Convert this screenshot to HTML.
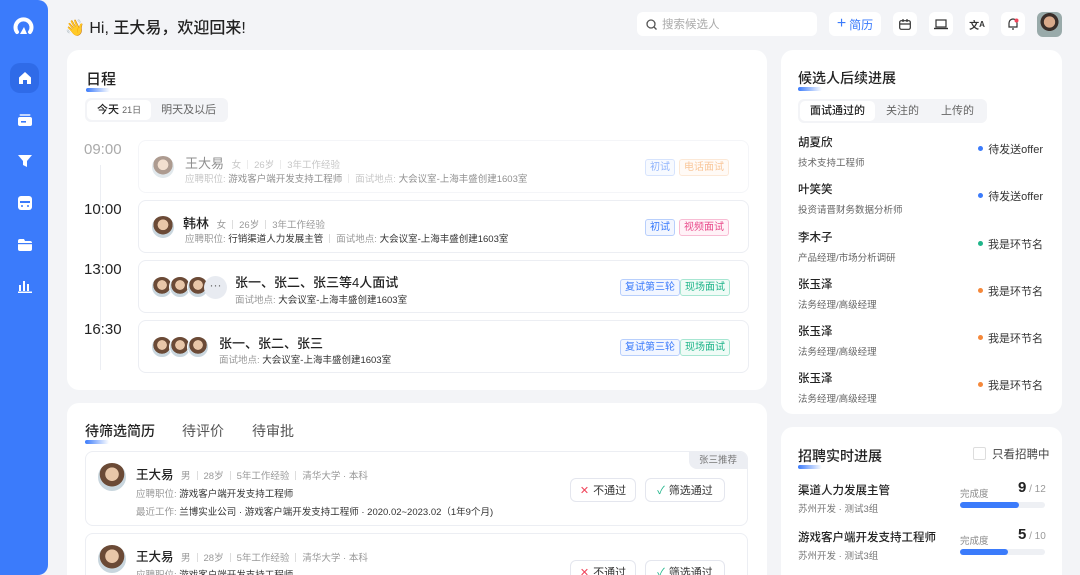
<!DOCTYPE html>
<html style="overflow:hidden;height:575px"><head><meta charset="utf-8"><style>
*{margin:0;padding:0;box-sizing:border-box}
body{width:1080px;height:575px;overflow:hidden;background:#f3f4f7;font-family:"Liberation Sans","Noto Sans CJK SC",sans-serif;color:#222;position:relative;font-size:12px}
.abs{position:absolute}
.side{left:0;top:0;width:48px;height:575px;background:#3b7bfb;border-radius:0 10px 10px 0}
.side .ic{position:absolute;left:10px;width:29px;height:30px;border-radius:10px;display:flex;align-items:center;justify-content:center}
.card{background:#fff;border-radius:12px;position:absolute}
.ttl{font-size:15px;font-weight:500;color:#222;position:absolute}
.ttl:after{content:"";position:absolute;left:0;bottom:-3px;width:24px;height:4px;border-radius:2px;background:linear-gradient(90deg,#3b7bfb,rgba(59,123,251,0))}
.seg{position:absolute;background:#f3f4f7;border-radius:6px;display:flex;padding:2px;font-size:11px;color:#666}
.seg div{padding:0 10px;line-height:20px;border-radius:5px}
.seg .on{background:#fff;color:#222;font-weight:500}
.hb{position:absolute;top:12px;height:24px;background:#fff;border-radius:6px;display:flex;align-items:center;justify-content:center}
.time{position:absolute;left:84px;font-size:15px;color:#222}
.ev{position:absolute;left:138px;width:611px;height:53px;border:1px solid #eceef3;border-radius:8px}
.tag{position:absolute;font-size:10px;height:17px;line-height:15px;border:1px solid;border-radius:3px;padding:0 4px}
.av{position:absolute;width:22px;height:22px;border-radius:50%;background:radial-gradient(circle at 50% 40%,#e8c6a8 0 30%,#6b4a36 32% 55%,#c9d6de 57%);border:1px solid #fff}
.g{color:#999}
.sep{display:inline-block;width:1px;height:9px;background:#ddd;margin:0 6px;vertical-align:-1px}
.rl{position:absolute;left:798px;width:250px}
.rl .n{font-size:11.5px;font-weight:500;color:#222}
.rl .s{font-size:9.5px;color:#666;margin-top:5px}
.rl .st{position:absolute;right:5px;top:7px;font-size:11px;color:#333}
.rl .st:before{content:"";display:inline-block;width:5px;height:5px;border-radius:50%;background:var(--c);margin-right:5px;vertical-align:2px}
.btn{position:absolute;height:24px;border:1px solid #e4e6ee;border-radius:6px;font-size:11px;display:flex;align-items:center;justify-content:center;color:#333}
</style></head><body>
<div class="abs side">
 <svg class="abs" style="left:13px;top:15px" width="22" height="22" viewBox="0 0 22 22"><path d="M4 17 A8 8 0 1 1 17 17" fill="none" stroke="#fff" stroke-width="4" stroke-linecap="round"/><path d="M11 12 l-4 7 h7z" fill="#fff"/></svg>
 <div class="ic" style="top:63px;background:#2f6be8"><svg width="14" height="14" viewBox="0 0 14 14"><path d="M7 1 L13 6.5 V13 H9 V9 H5 V13 H1 V6.5z" fill="#fff"/></svg></div>
 <div class="ic" style="top:105px"><svg width="14" height="12"><rect x="0" y="3" width="14" height="9" rx="2" fill="#fff"/><rect x="1.5" y="0" width="11" height="2" rx="1" fill="#fff" opacity=".7"/><rect x="3" y="7" width="5" height="1.6" fill="#3b7bfb"/></svg></div>
 <div class="ic" style="top:146px"><svg width="14" height="14"><path d="M0 1 H14 L9 7 V13 L5 11 V7z" fill="#fff"/></svg></div>
 <div class="ic" style="top:188px"><svg width="14" height="14"><rect x="0" y="0" width="14" height="14" rx="3" fill="#fff"/><rect x="2" y="5" width="10" height="2" fill="#3b7bfb"/><circle cx="4" cy="10" r="1" fill="#3b7bfb"/><circle cx="10" cy="10" r="1" fill="#3b7bfb"/></svg></div>
 <div class="ic" style="top:230px"><svg width="14" height="12"><path d="M0 2 Q0 0 2 0 H6 L7 2 H12 Q14 2 14 4 V10 Q14 12 12 12 H2 Q0 12 0 10z" fill="#fff"/><rect x="0" y="4" width="14" height="1.2" fill="#3b7bfb"/></svg></div>
 <div class="ic" style="top:271px"><svg width="14" height="13"><rect x="1" y="5" width="2" height="6" fill="#fff"/><rect x="5" y="1" width="2" height="10" fill="#fff"/><rect x="9" y="4" width="2" height="7" fill="#fff"/><rect x="0" y="11.5" width="14" height="1.5" fill="#fff"/></svg></div>
</div>
<div class="abs" style="left:65px;top:14px;font-size:16px;font-weight:500;color:#222">👋 Hi, 王大易，欢迎回来!</div>
<div class="hb" style="left:637px;width:180px;justify-content:flex-start;padding-left:9px;font-size:11.5px;color:#aaa"><svg width="11" height="11" style="margin-right:5px"><circle cx="5" cy="5" r="4" fill="none" stroke="#555" stroke-width="1.3"/><path d="M8 8l2.5 2.5" stroke="#555" stroke-width="1.3"/></svg>搜索候选人</div>
<div class="hb" style="left:829px;width:52px;color:#3b7bfb;font-size:12px"><span style="font-size:16px;margin-right:3px;line-height:1">+</span>简历</div>
<div class="hb" style="left:893px;width:24px"><svg width="12" height="11"><rect x=".7" y="1.7" width="10.6" height="8.6" rx="1.5" fill="none" stroke="#333" stroke-width="1.2"/><path d="M1 5h10M4 0v3M8 0v3" stroke="#333" stroke-width="1.2"/></svg></div>
<div class="hb" style="left:929px;width:24px"><svg width="14" height="11"><rect x="2" y="1" width="10" height="7" fill="none" stroke="#333" stroke-width="1.2"/><path d="M0 9.5h14" stroke="#333" stroke-width="1.4"/></svg></div>
<div class="hb" style="left:965px;width:24px;font-size:10px;font-weight:bold;color:#333">文<span style="font-size:8px">A</span></div>
<div class="hb" style="left:1001px;width:24px"><svg width="12" height="12"><path d="M2 9 V5 A4 4 0 0 1 10 5 V9 Z M5 11h2" fill="none" stroke="#333" stroke-width="1.2"/><circle cx="9.5" cy="2.5" r="2" fill="#f0445a"/></svg></div>
<div class="abs" style="left:1037px;top:12px;width:25px;height:25px;border-radius:6px;background:radial-gradient(circle at 50% 40%,#d9a98a 0 28%,#3a2e2a 30% 45%,#9aa 47%)"></div>

<div class="card" style="left:67px;top:50px;width:700px;height:340px"></div>
<div class="ttl" style="left:86px;top:68px">日程</div>
<div class="seg" style="left:85px;top:98px"><div class="on">今天 <span style="font-size:9px;color:#666;font-weight:normal">21日</span></div><div>明天及以后</div></div>
<div class="abs" style="left:100px;top:165px;width:1px;height:205px;background:#eceef3"></div>
<div class="time" style="top:141px;color:#aaa">09:00</div>
<div class="time" style="top:201px">10:00</div>
<div class="time" style="top:261px">13:00</div>
<div class="time" style="top:321px">16:30</div>

<div class="ev" style="top:140px;opacity:.55">
 <div class="av" style="left:12px;top:14px;width:24px;height:24px"></div>
 <div class="abs" style="left:46px;top:12px;font-size:13px;color:#333">王大易 <span class="g" style="font-size:9.5px;margin-left:4px">女<span class="sep"></span>26岁<span class="sep"></span>3年工作经验</span></div>
 <div class="abs g" style="left:46px;top:30px;font-size:9.5px">应聘职位: <span style="color:#333">游戏客户端开发支持工程师</span><span class="sep"></span>面试地点: <span style="color:#333">大会议室-上海丰盛创建1603室</span></div>
 <div class="tag" style="left:506px;top:18px;color:#3b7bfb;border-color:#b8cffc;background:#f2f6ff">初试</div>
 <div class="tag" style="left:540px;top:18px;color:#f59a4a;border-color:#fbd8b8;background:#fff7ef">电话面试</div>
</div>
<div class="ev" style="top:200px">
 <div class="av" style="left:12px;top:14px;width:24px;height:24px"></div>
 <div class="abs" style="left:44px;top:12px;font-size:13px;color:#222;font-weight:500">韩林 <span class="g" style="font-size:9.5px;margin-left:4px;font-weight:normal">女<span class="sep"></span>26岁<span class="sep"></span>3年工作经验</span></div>
 <div class="abs g" style="left:46px;top:30px;font-size:9.5px">应聘职位: <span style="color:#333">行销渠道人力发展主管</span><span class="sep"></span>面试地点: <span style="color:#333">大会议室-上海丰盛创建1603室</span></div>
 <div class="tag" style="left:506px;top:18px;color:#3b7bfb;border-color:#b8cffc;background:#f2f6ff">初试</div>
 <div class="tag" style="left:540px;top:18px;color:#e94a8a;border-color:#f8bcd4;background:#fff2f7">视频面试</div>
</div>
<div class="ev" style="top:260px">
 <div class="av" style="left:12px;top:15px"></div><div class="av" style="left:30px;top:15px"></div><div class="av" style="left:48px;top:15px"></div>
 <div class="abs" style="left:65px;top:15px;width:23px;height:23px;border-radius:50%;background:#e8ebf1;color:#666;text-align:center;line-height:18px">···</div>
 <div class="abs" style="left:96px;top:11px;font-size:13px;font-weight:500">张一、张二、张三等4人面试</div>
 <div class="abs g" style="left:96px;top:31px;font-size:9.5px">面试地点: <span style="color:#333">大会议室-上海丰盛创建1603室</span></div>
 <div class="tag" style="left:481px;top:18px;color:#3b7bfb;border-color:#b8cffc;background:#f2f6ff">复试第三轮</div>
 <div class="tag" style="left:541px;top:18px;color:#1fb58a;border-color:#a8e6d2;background:#effbf6">现场面试</div>
</div>
<div class="ev" style="top:320px">
 <div class="av" style="left:12px;top:15px"></div><div class="av" style="left:30px;top:15px"></div><div class="av" style="left:48px;top:15px"></div>
 <div class="abs" style="left:80px;top:12px;font-size:13px;font-weight:500">张一、张二、张三</div>
 <div class="abs g" style="left:80px;top:31px;font-size:9.5px">面试地点: <span style="color:#333">大会议室-上海丰盛创建1603室</span></div>
 <div class="tag" style="left:481px;top:18px;color:#3b7bfb;border-color:#b8cffc;background:#f2f6ff">复试第三轮</div>
 <div class="tag" style="left:541px;top:18px;color:#1fb58a;border-color:#a8e6d2;background:#effbf6">现场面试</div>
</div>

<div class="card" style="left:67px;top:403px;width:700px;height:172px;border-radius:12px 12px 0 0"></div>
<div class="ttl" style="left:85px;top:421px;font-size:14px">待筛选简历</div>
<div class="abs" style="left:182px;top:421px;font-size:14px;color:#555">待评价</div>
<div class="abs" style="left:252px;top:421px;font-size:14px;color:#555">待审批</div>
<div class="abs" style="left:85px;top:451px;width:663px;height:75px;border:1px solid #eceef3;border-radius:8px;overflow:hidden">
 <div class="abs" style="right:0;top:0;width:58px;height:17px;background:#eceef3;border-radius:0 0 0 8px;font-size:9.5px;color:#777;text-align:center;line-height:17px">张三推荐</div>
 <div class="av" style="left:11px;top:10px;width:30px;height:30px"></div>
 <div class="abs" style="left:50px;top:12px;font-size:12.5px;font-weight:500">王大易 <span class="g" style="font-size:9.5px;margin-left:4px;font-weight:normal">男<span class="sep"></span>28岁<span class="sep"></span>5年工作经验<span class="sep"></span>清华大学 · 本科</span></div>
 <div class="abs g" style="left:50px;top:34px;font-size:9.5px">应聘职位: <span style="color:#333">游戏客户端开发支持工程师</span></div>
 <div class="abs g" style="left:50px;top:52px;font-size:9.5px">最近工作: <span style="color:#333">兰博实业公司 · 游戏客户端开发支持工程师 · 2020.02~2023.02（1年9个月)</span></div>
 <div class="btn" style="left:484px;top:26px;width:66px"><span style="color:#f0445a;margin-right:4px">✕</span>不通过</div>
 <div class="btn" style="left:559px;top:26px;width:80px"><span style="color:#1fb58a;margin-right:4px">✓</span>筛选通过</div>
</div>
<div class="abs" style="left:85px;top:533px;width:663px;height:60px;border:1px solid #eceef3;border-radius:8px;overflow:hidden">
 <div class="av" style="left:11px;top:10px;width:30px;height:30px"></div>
 <div class="abs" style="left:50px;top:12px;font-size:12.5px;font-weight:500">王大易 <span class="g" style="font-size:9.5px;margin-left:4px;font-weight:normal">男<span class="sep"></span>28岁<span class="sep"></span>5年工作经验<span class="sep"></span>清华大学 · 本科</span></div>
 <div class="abs g" style="left:50px;top:33px;font-size:9.5px">应聘职位: <span style="color:#333">游戏客户端开发支持工程师</span></div>
 <div class="btn" style="left:484px;top:26px;width:66px"><span style="color:#f0445a;margin-right:4px">✕</span>不通过</div>
 <div class="btn" style="left:559px;top:26px;width:80px"><span style="color:#1fb58a;margin-right:4px">✓</span>筛选通过</div>
</div>

<div class="card" style="left:781px;top:50px;width:281px;height:364px"></div>
<div class="ttl" style="left:798px;top:68px;font-size:14px">候选人后续进展</div>
<div class="seg" style="left:798px;top:99px"><div class="on" style="padding:0 10px">面试通过的</div><div style="padding:0 11px">关注的</div><div style="padding:0 11px">上传的</div></div>
<div class="rl" style="top:134px"><div class="n">胡夏欣</div><div class="s">技术支持工程师</div><div class="st" style="--c:#3b7bfb">待发送offer</div></div>
<div class="rl" style="top:181px"><div class="n">叶笑笑</div><div class="s">投资请晋财务数据分析师</div><div class="st" style="--c:#3b7bfb">待发送offer</div></div>
<div class="rl" style="top:229px"><div class="n">李木子</div><div class="s">产品经理/市场分析调研</div><div class="st" style="--c:#1fb58a">我是环节名</div></div>
<div class="rl" style="top:276px"><div class="n">张玉泽</div><div class="s">法务经理/高级经理</div><div class="st" style="--c:#f5883a">我是环节名</div></div>
<div class="rl" style="top:323px"><div class="n">张玉泽</div><div class="s">法务经理/高级经理</div><div class="st" style="--c:#f5883a">我是环节名</div></div>
<div class="rl" style="top:370px"><div class="n">张玉泽</div><div class="s">法务经理/高级经理</div><div class="st" style="--c:#f5883a">我是环节名</div></div>

<div class="card" style="left:781px;top:427px;width:281px;height:148px;border-radius:12px 12px 0 0"></div>
<div class="ttl" style="left:798px;top:446px;font-size:14px">招聘实时进展</div>
<div class="abs" style="left:973px;top:447px;width:13px;height:13px;border:1px solid #ddd;border-radius:2px"></div>
<div class="abs" style="left:992px;top:446px;font-size:11.5px;color:#444">只看招聘中</div>
<div class="abs" style="left:798px;top:482px;font-size:11.5px;font-weight:500">渠道人力发展主管</div>
<div class="abs" style="left:798px;top:501px;font-size:9.5px;color:#777">苏州开发 · 测试3组</div>
<div class="abs" style="left:960px;top:486px;font-size:9.5px;color:#888">完成度</div>
<div class="abs" style="left:1018px;top:479px;font-size:15px;font-weight:bold">9<span style="font-size:10px;color:#999;font-weight:normal"> / 12</span></div>
<div class="abs" style="left:960px;top:502px;width:85px;height:6px;background:#eef0f4;border-radius:3px"><div style="width:59px;height:6px;background:#3b7bfb;border-radius:3px"></div></div>
<div class="abs" style="left:798px;top:529px;font-size:11.5px;font-weight:500">游戏客户端开发支持工程师</div>
<div class="abs" style="left:798px;top:548px;font-size:9.5px;color:#777">苏州开发 · 测试3组</div>
<div class="abs" style="left:960px;top:533px;font-size:9.5px;color:#888">完成度</div>
<div class="abs" style="left:1018px;top:526px;font-size:15px;font-weight:bold">5<span style="font-size:10px;color:#999;font-weight:normal"> / 10</span></div>
<div class="abs" style="left:960px;top:549px;width:85px;height:6px;background:#eef0f4;border-radius:3px"><div style="width:48px;height:6px;background:#3b7bfb;border-radius:3px"></div></div>
</body></html>
